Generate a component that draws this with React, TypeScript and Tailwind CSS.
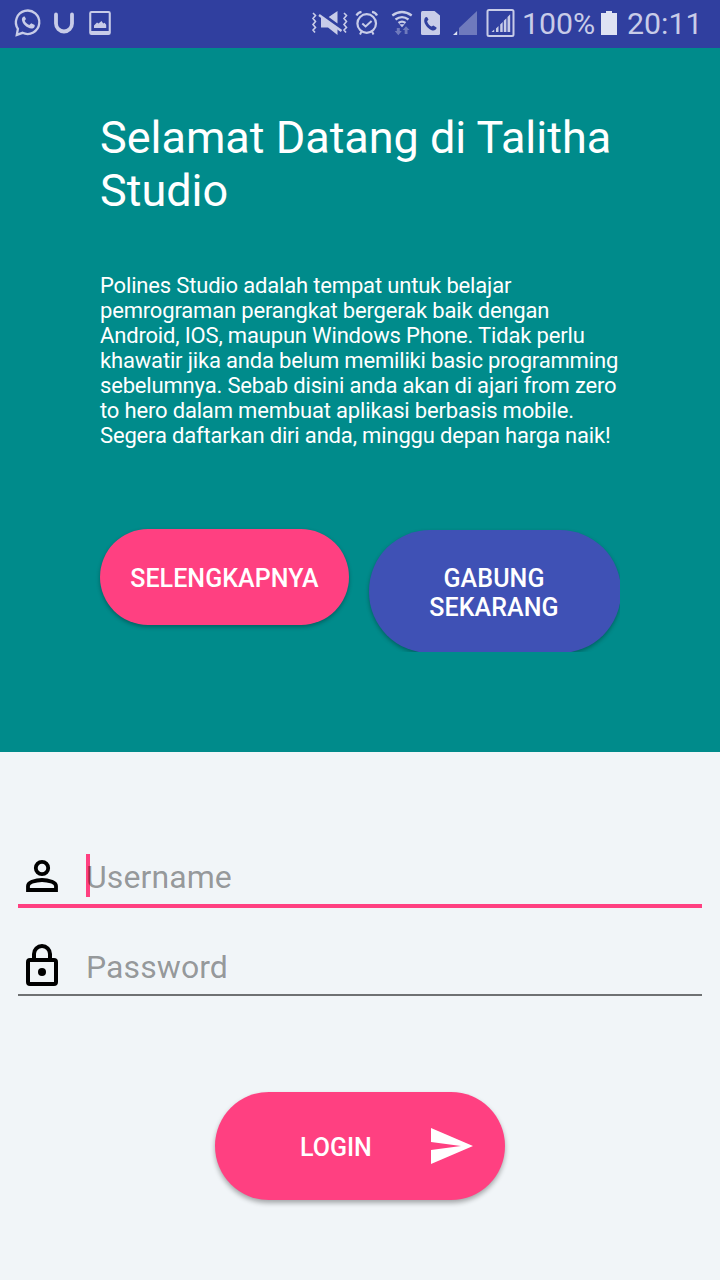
import React from "react";

const ICON = "#c8cce8";

type GlyphProps = { className: string; viewBox: string; children: React.ReactNode };

function Glyph({ className, viewBox, children }: GlyphProps) {
  return (
    <svg className={`h-12 shrink-0 ${className}`} viewBox={viewBox} fill="none" aria-hidden="true">
      {children}
    </svg>
  );
}

function StatusBar() {
  return (
    <header className="flex h-12 shrink-0 items-center bg-[#303f9f] text-[#c8cce8]">
      <Glyph className="ml-3 w-8" viewBox="12 0 32 48">
        <path d="M17.9 28.8A11.7 11.7 0 1 1 22.500 32.800L16.800 34.900Z" stroke={ICON} strokeWidth="2.300" />
        <path
          d="M23.800 16.400c-.9.3-2 1.500-1.900 3.200.2 4.300 5.300 8.700 9.400 9 1.800 0 3.200-1.200 3.400-2.400v-1.200l-3.500-1.700-1.900 1.700c-2-.7-3.700-2.200-4.600-4.200l1.300-1.700-1.300-2.700Z"
          fill={ICON}
        />
      </Glyph>
      <Glyph className="ml-1 w-8" viewBox="48 0 32 48">
        <path d="M56 14.500V23.500a8 8 0 0 0 16 0V14.500" stroke={ICON} strokeWidth="3.800" strokeLinecap="round" />
      </Glyph>
      <Glyph className="ml-1 w-8" viewBox="84 0 32 48">
        <path
          fillRule="evenodd"
          d="M91.500 11h17a2.300 2.300 0 0 1 2.300 2.300v19.400a2.300 2.300 0 0 1-2.300 2.300h-17a2.300 2.300 0 0 1-2.300-2.300V13.300A2.300 2.300 0 0 1 91.500 11ZM91.300 13v18h17.400V13Z"
          fill={ICON}
        />
        <path d="M94 28v-2.500l3-3 1.500 1 3-2.500 1.700 2.500 1.300-.8 1.700 2V28Z" fill={ICON} />
      </Glyph>

      <Glyph className="ml-auto w-10" viewBox="310 0 40 48">
        <path
          d="M313 13l2.500 2.500-2.500 3 2.500 3-2.500 3 2.500 3-2.500 2.500 2 2.500M344 13l2.500 2.500-2.500 3 2.500 3-2.500 3 2.500 3-2.500 2.500 2 2.500"
          stroke={ICON}
          strokeWidth="1.600"
        />
        <path d="M337.500 11v12.500l-8.800-6.500ZM321 17l16.500 11.500V35l-9.500-7.500H321Z" fill={ICON} />
        <path d="M319 15l22.500 16" stroke={ICON} strokeWidth="2.400" />
      </Glyph>
      <Glyph className="ml-[3px] w-7" viewBox="353 0 28 48">
        <circle cx="366.700" cy="23.500" r="9.300" stroke={ICON} strokeWidth="2.200" />
        <path d="M362.300 23.500l3.300 3 6-5.500M361.500 31.500l-1.500 3M372 31.500l1.500 3" stroke={ICON} strokeWidth="2" />
        <path d="M356.500 15.500q1.200-3 5-3.700M377 15.500q-1.200-3-5-3.700" stroke={ICON} strokeWidth="2.200" />
      </Glyph>
      <Glyph className="ml-[8.5px] w-6" viewBox="389.500 0 24 48">
        <path d="M391.800 15.500q9.700-7 19.400 0M395 19.500q6.500-4.800 13 0M398 23q3.500-2.800 7 0" stroke={ICON} strokeWidth="2.300" />
        <path d="M398.800 24.200h5.400l-2.700 3Z" fill={ICON} />
        <path
          d="M396.300 28h3v3h2l-3.500 4.300-3.500-4.300h2ZM404.200 34v-4h-2l3.300-3.800 3.500 3.800h-2v4Z"
          fill={ICON}
          opacity=".42"
        />
      </Glyph>
      <Glyph className="ml-[4.5px] w-6" viewBox="418 0 24 48">
        <path d="M422.500 11h12l5.500 4.500V33.500a1.500 1.500 0 0 1-1.500 1.500h-16a1.500 1.500 0 0 1-1.500-1.500v-21a1.500 1.500 0 0 1 1.500-1.500Z" fill={ICON} />
        <path
          d="M425.500 17.200l1.500-.3 1.500 2.700-1.400 1.700c.7 2.400 2.300 4.300 4.500 5.300l1.700-1.200 3.200 2v1.200c-1.200 1.900-3.100 2.400-5.400 1.300-3.300-1.500-7.100-6.200-6.900-9.500q.1-2.400 1.300-3.200Z"
          fill="#303f9f"
        />
      </Glyph>
      <Glyph className="ml-[9px] w-7" viewBox="451 0 28 48">
        <path d="M459 35V28L477 11v24Z" fill={ICON} opacity=".42" />
        <path d="M453 35l4.200-4v4Z" fill="#dfe2f3" />
      </Glyph>
      <Glyph className="ml-1.5 w-8" viewBox="485 0 32 48">
        <rect x="487.500" y="10" width="26" height="26" rx="1.500" stroke={ICON} strokeWidth="2" />
        <path
          d="M491.500 32l2.700-2.500V32ZM496 28.500l2.500-2.500v6H496ZM500.200 24.500l2.500-2.500v10h-2.500ZM503.800 20.800l2.600-2.600V32h-2.600ZM507.500 17l2.700-2.800V32h-2.700Z"
          fill={ICON}
        />
      </Glyph>
      <span className="ml-[5px] w-[75px] shrink-0 text-[30.3px] leading-[46px]">100%</span>
      <Glyph className="w-6" viewBox="597 0 24 48">
        <path d="M601 13h5v-2h6v2h5v22h-16Z" fill="#dfe2f3" />
      </Glyph>
      <span className="ml-[5px] w-[94px] shrink-0 pl-px text-[30.3px] leading-[46px]">20:11</span>
    </header>
  );
}

function Welcome() {
  return (
    <section className="h-[704px] shrink-0 bg-[#008b8b] px-[100px] pt-[63px] text-white">
      <h1 className="text-[45px] leading-[53px] tracking-[-0.02px]">
        Selamat Datang di Talitha
        <br />
        Studio
      </h1>
      <p className="mt-[56px] text-[22px] leading-[25px] tracking-[-0.17px] whitespace-nowrap">
        Polines Studio adalah tempat untuk belajar
        <br />
        pemrograman perangkat bergerak baik dengan
        <br />
        Android, IOS, maupun Windows Phone. Tidak perlu
        <br />
        khawatir jika anda belum memiliki basic programming
        <br />
        sebelumnya. Sebab disini anda akan di ajari from zero
        <br />
        to hero dalam membuat aplikasi berbasis mobile.
        <br />
        Segera daftarkan diri anda, minggu depan harga naik!
      </p>
      <div className="mt-[80px] flex items-start">
        <button className="mt-px h-24 w-[249px] shrink-0 rounded-full bg-[#ff4081] pt-[2px] text-[25px] leading-[29px] font-medium tracking-[0.06px] shadow-[0_2px_4px_rgba(0,0,0,0.3)]">
          SELENGKAPNYA
        </button>
        <div className="ml-2.5 h-[124px] w-[261px] shrink-0 overflow-hidden pt-[2px] pl-2.5">
          <button className="h-[123px] w-[252px] rounded-[61px] bg-[#3f51b5] pt-[3px] pr-[2px] text-[25px] leading-[29px] font-medium tracking-[0.08px] shadow-[0_2px_4px_rgba(0,0,0,0.3)]">
            GABUNG
            <br />
            SEKARANG
          </button>
        </div>
      </div>
    </section>
  );
}

function LoginForm() {
  return (
    <main className="flex flex-1 flex-col items-center px-[18px] pt-[97px]">
      <label className="flex h-[59px] w-full items-start border-b-4 border-[#ff4081] pl-[6px]">
        <svg className="mt-[3px] h-12 w-9 shrink-0" viewBox="24 852 36 48" aria-hidden="true">
          <circle cx="42" cy="868" r="6.200" fill="none" stroke="#000" strokeWidth="3.800" />
          <path d="M28 890v-4q0-2.500 4-4.200 10-3.600 20 0 4 1.700 4 4.200v4Z" fill="none" stroke="#000" strokeWidth="3.800" />
        </svg>
        <span className="relative mt-[7px] ml-[26px] text-[32px] leading-[42px] tracking-[0.08px]">
          <span className="absolute -top-[2px] left-0 h-[43px] w-1 bg-[#ff4081]" />
          <span className="relative text-black/40">Username</span>
        </span>
      </label>
      <label className="mt-[30px] flex h-[58px] w-full items-start border-b-2 border-[#6f7173] pl-[6px]">
        <svg className="mt-[3px] h-12 w-9 shrink-0" viewBox="24 941 36 48" aria-hidden="true">
          <path d="M34 959v-5a8 8 0 0 1 16 0v5" fill="none" stroke="#000" strokeWidth="4" />
          <rect x="28" y="960" width="28" height="24" rx="2" fill="none" stroke="#000" strokeWidth="4" />
          <circle cx="42" cy="972" r="4" />
        </svg>
        <span className="mt-[8px] ml-[26px] text-[32px] leading-[42px] tracking-[0.08px] text-black/40">Password</span>
      </label>
      <button className="mt-[96px] flex h-[108px] w-[290px] shrink-0 items-center rounded-full bg-[#ff4081] pr-8 pl-[85px] text-[25px] leading-[29px] font-medium text-white shadow-[0_3px_5px_rgba(0,0,0,0.32)]">
        <span className="pt-[3px]">LOGIN</span>
        <svg className="ml-auto h-9 w-[42px]" viewBox="0 0 42 36" fill="currentColor" aria-hidden="true">
          <path d="M0 0l42 18L0 36V22l30-4L0 14Z" />
        </svg>
      </button>
    </main>
  );
}

export default function App() {
  return (
    <div className="flex h-[1280px] w-[720px] flex-col overflow-hidden bg-[#f1f5f8] font-[Roboto,sans-serif]">
      <StatusBar />
      <Welcome />
      <LoginForm />
    </div>
  );
}
